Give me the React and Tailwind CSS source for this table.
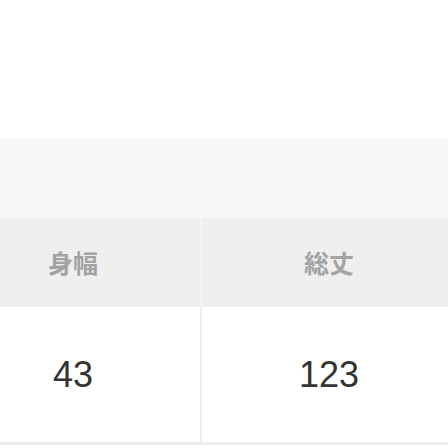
const rows = [{ label: "身幅", value: "43" }, { label: "総丈", value: "123" }];

export default function App() {
  return (
    <div
      className="h-[448px] w-[448px] overflow-hidden bg-white"
      style={{ fontFamily: '"Noto Sans CJK JP", "Noto Sans", sans-serif' }}
    >
      <div className="h-[138px]" />
      <div className="h-[80px] bg-[#f7f7f7]" />
      <div className="ml-[-54px] grid w-[510px] grid-cols-[254px_256px]">
        <div className="flex h-[89px] items-center justify-center bg-[#efefef] text-[25px] font-bold leading-none text-[#a3a3a3]">
          {rows[0].label}
        </div>
        <div className="flex h-[89px] items-center justify-center border-l-2 border-[#f4f4f4] bg-[#efefef] text-[25px] font-bold leading-none text-[#a3a3a3]">
          {rows[1].label}
        </div>
        <div className="flex h-[138px] items-center justify-center border-b-[3px] border-[#ececec] font-['Liberation_Sans',sans-serif] text-[36px] leading-none text-[#333333]">
          {rows[0].value}
        </div>
        <div className="flex h-[138px] items-center justify-center border-b-[3px] border-l-2 border-[#ededed] font-['Liberation_Sans',sans-serif] text-[36px] leading-none text-[#333333]">
          {rows[1].value}
        </div>
      </div>
    </div>
  );
}
